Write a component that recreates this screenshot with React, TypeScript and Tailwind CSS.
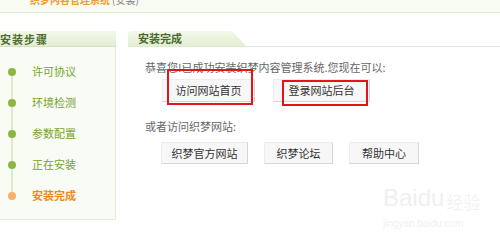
const steps = [
  { name: '许可协议', done: true },
  { name: '环境检测', done: true },
  { name: '参数配置', done: true },
  { name: '正在安装', done: true },
  { name: '安装完成', done: false },
];

const font = { fontFamily: '"Noto Sans CJK SC", "Liberation Sans", sans-serif' };

function Btn({ label, className = '' }: { label: string; className?: string }) {
  return (
    <div
      className={`flex items-center justify-center bg-[#f7f7f7] border border-[#ececec] border-b-[#d6d6d6] border-r-[#d6d6d6] text-[11px] text-[#333] ${className}`}
    >
      {label}
    </div>
  );
}

export default function App() {
  return (
    <div className="relative w-[500px] h-[238px] bg-white overflow-hidden" style={font}>
      {/* top strip */}
      <div className="h-[13px] bg-[#f7fbf2] border-b border-[#dcecd0] overflow-hidden">
        <div className="flex whitespace-nowrap -mt-[8px] pl-[30px] text-[10px] leading-[16px]">
          <span className="shrink-0 text-[#f39a2a] font-bold">织梦内容管理系统</span>
          <span className="shrink-0 ml-[2px] text-[#888]">(安装)</span>
        </div>
      </div>

      <div className="flex pt-[18px]">
        {/* left steps */}
        <div className="w-[116px] shrink-0">
          <div className="h-[16px] bg-gradient-to-b from-[#f3f8ea] to-[#e3eed4] border-b border-[#d3e3c0] text-[11px] leading-[16px] font-bold text-[#4f6e30] tracking-[1px]">
            安装步骤
          </div>
          <div className="relative h-[173px] bg-[#f9fbf5] border-r border-b border-[#e3ecd8] pt-[9px]">
            <div className="absolute left-[11px] top-[24px] h-[124px] w-[2px] bg-[#dcebcc]" />
            {steps.map((s) => (
              <div key={s.name} className="relative flex items-center h-[31px]">
                <span
                  className={`ml-[8px] w-[8px] h-[8px] rounded-full ${
                    s.done ? 'bg-[#8db640]' : 'bg-[#f8b06a]'
                  }`}
                />
                <span
                  className={`ml-[16px] text-[11px] ${
                    s.done ? 'text-[#76a32e]' : 'text-[#f08a1c] font-bold'
                  }`}
                >
                  {s.name}
                </span>
              </div>
            ))}
          </div>
        </div>

        {/* right content */}
        <div className="flex-1 ml-[12px]">
          <div className="h-[16px] border-b border-[#dcebcf]">
            <div className="w-[118px] h-[15px] bg-gradient-to-b from-[#f3f8ea] to-[#e2eed3] rounded-tl-[4px] [clip-path:polygon(0_0,88%_0,100%_100%,0_100%)] pl-[10px] text-[11px] leading-[15px] font-bold text-[#4a6a2c]">
              安装完成
            </div>
          </div>

          <div className="mt-[13px] pl-[17px] text-[11px] leading-[14px] text-[#666]">
            恭喜您!已成功安装织梦内容管理系统.您现在可以:
          </div>

          <div className="flex mt-[5px] ml-[34px] gap-[18px]">
            <div className="relative">
              <Btn label="访问网站首页" className="w-[93px] h-[23px]" />
              <div className="absolute left-[5px] -top-[10px] w-[86px] h-[36px] border-2 border-[#e3141b]" />
            </div>
            <div className="relative">
              <Btn label="登录网站后台" className="w-[97px] h-[23px]" />
              <div className="absolute left-[9px] top-[1px] w-[86px] h-[26px] border-2 border-[#e3141b]" />
            </div>
          </div>

          <div className="mt-[17px] pl-[17px] text-[11px] leading-[14px] text-[#666]">
            或者访问织梦网站:
          </div>

          <div className="flex mt-[9px] ml-[33px] gap-[16px]">
            <Btn label="织梦官方网站" className="w-[87px] h-[22px]" />
            <Btn label="织梦论坛" className="w-[69px] h-[22px]" />
            <Btn label="帮助中心" className="w-[70px] h-[22px]" />
          </div>
        </div>
      </div>

      {/* watermark */}
      <div className="absolute left-[383px] top-[186px] text-[#f0f0f0] select-none">
        <div className="flex items-end leading-none">
          <span className="text-[24px]" style={{ fontFamily: '"Liberation Sans", sans-serif' }}>
            Baidu
          </span>
          <span className="text-[17px] ml-[2px] text-[#f2f2f2]">经验</span>
        </div>
        <div className="text-[10px] mt-[6px]" style={{ fontFamily: '"Liberation Sans", sans-serif' }}>
          jingyan.baidu.com
        </div>
      </div>
    </div>
  );
}
